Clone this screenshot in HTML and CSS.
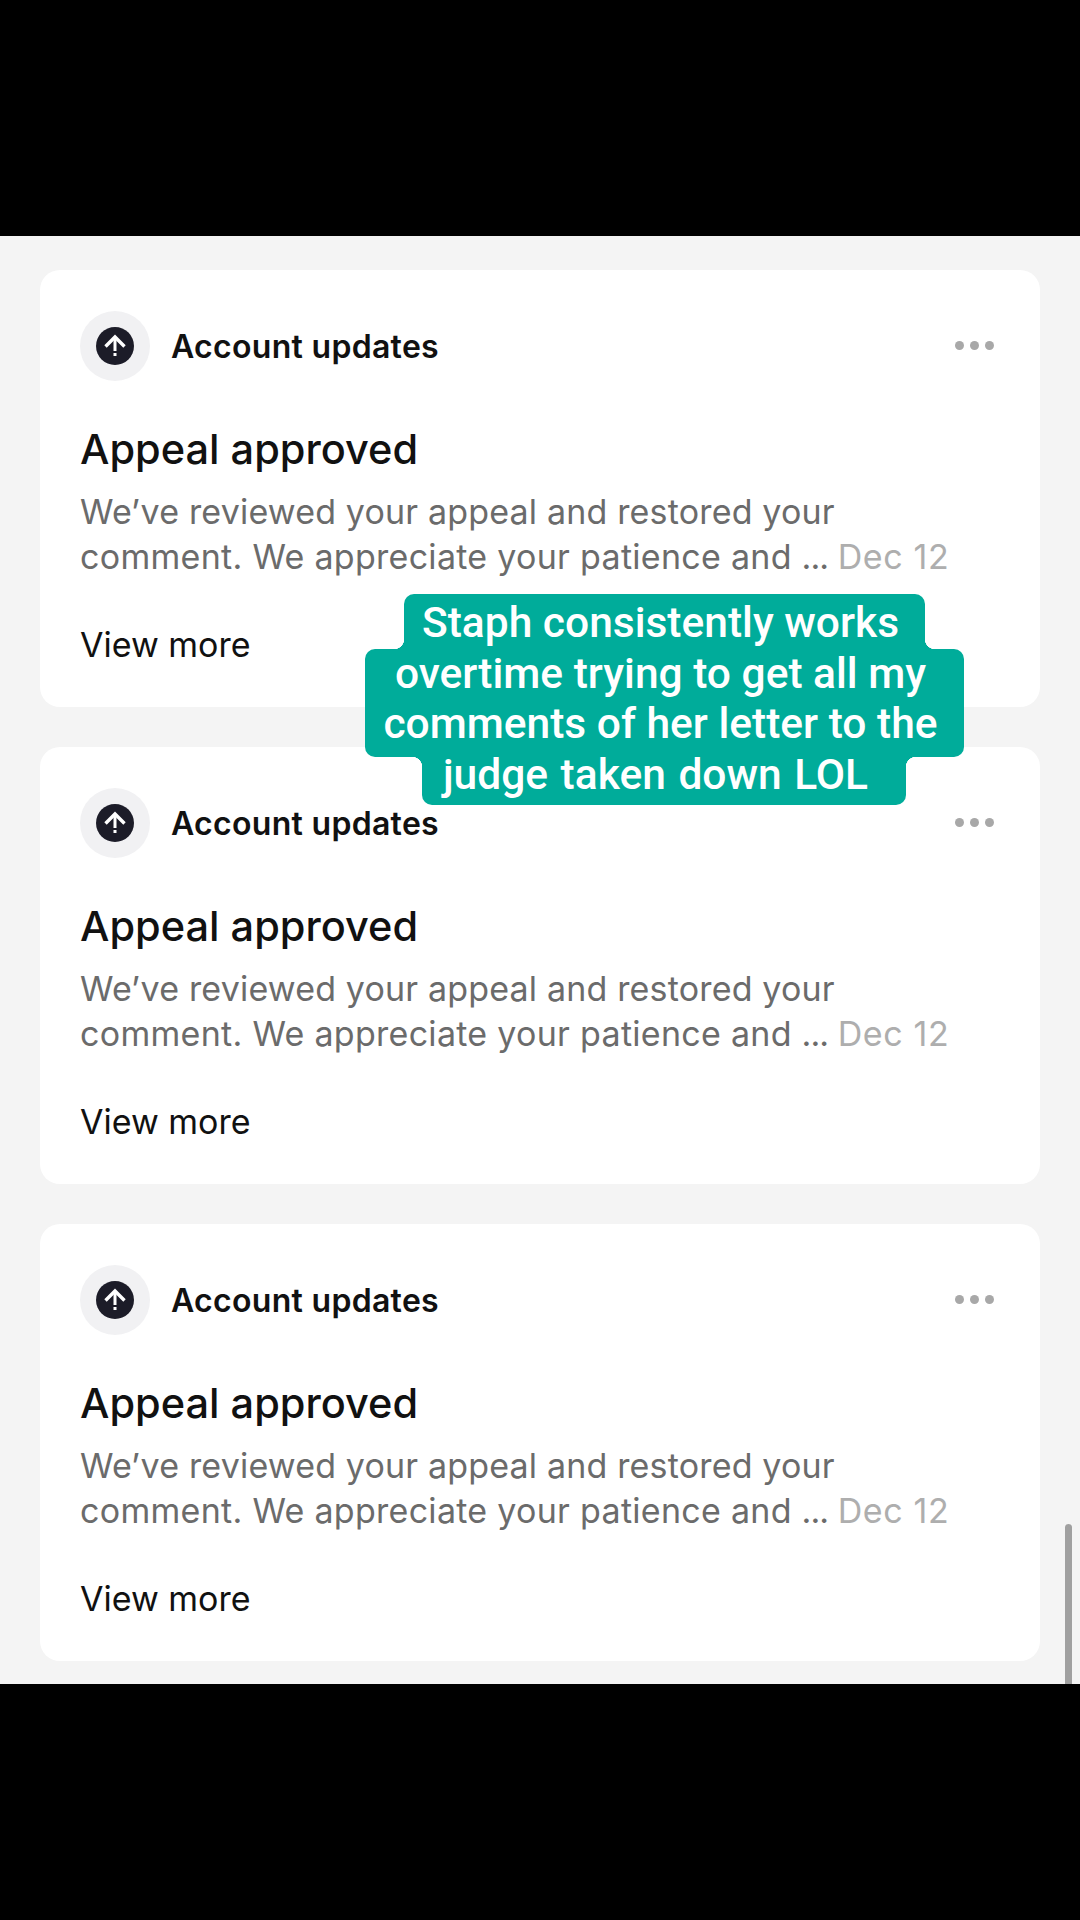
FILE: index.html
```html
<!DOCTYPE html>
<html>
  <head>
    <meta charset="utf-8">
    <title>Notifications</title>
    <link rel="stylesheet" href="styles.css">
  </head>
  <body>
    <div class="panel">
      <div class="card">
        <div class="head">
          <div class="badge">
            <svg class="icon" viewBox="0 0 40 40"><circle cx="20" cy="20" r="19" fill="#1c1c28"/><path d="M10.5 20.5 L20 11 L29.5 20.5" fill="none" stroke="#fff" stroke-width="3.4"/><path d="M20 13 V25" stroke="#fff" stroke-width="3"/><rect x="18.5" y="27" width="3" height="3" fill="#fff"/></svg>
          </div>
          <span class="source">Account updates</span>
          <div class="dots"><i></i><i></i><i></i></div>
        </div>
        <h2>Appeal approved</h2>
        <p class="body">We’ve reviewed your appeal and restored your<br><span class="wide">comment. We appreciate your patience and</span> <span class="ell">...</span> <span class="date">Dec 12</span></p>
        <div class="more">View more</div>
      </div>

      <div class="card">
        <div class="head">
          <div class="badge">
            <svg class="icon" viewBox="0 0 40 40"><circle cx="20" cy="20" r="19" fill="#1c1c28"/><path d="M10.5 20.5 L20 11 L29.5 20.5" fill="none" stroke="#fff" stroke-width="3.4"/><path d="M20 13 V25" stroke="#fff" stroke-width="3"/><rect x="18.5" y="27" width="3" height="3" fill="#fff"/></svg>
          </div>
          <span class="source">Account updates</span>
          <div class="dots"><i></i><i></i><i></i></div>
        </div>
        <h2>Appeal approved</h2>
        <p class="body">We’ve reviewed your appeal and restored your<br><span class="wide">comment. We appreciate your patience and</span> <span class="ell">...</span> <span class="date">Dec 12</span></p>
        <div class="more">View more</div>
      </div>

      <div class="card">
        <div class="head">
          <div class="badge">
            <svg class="icon" viewBox="0 0 40 40"><circle cx="20" cy="20" r="19" fill="#1c1c28"/><path d="M10.5 20.5 L20 11 L29.5 20.5" fill="none" stroke="#fff" stroke-width="3.4"/><path d="M20 13 V25" stroke="#fff" stroke-width="3"/><rect x="18.5" y="27" width="3" height="3" fill="#fff"/></svg>
          </div>
          <span class="source">Account updates</span>
          <div class="dots"><i></i><i></i><i></i></div>
        </div>
        <h2>Appeal approved</h2>
        <p class="body">We’ve reviewed your appeal and restored your<br><span class="wide">comment. We appreciate your patience and</span> <span class="ell">...</span> <span class="date">Dec 12</span></p>
        <div class="more">View more</div>
      </div>

      <div class="scrollbar"></div>
    </div>

    <div class="caption">
      <span class="line l1">Staph consistently works</span>
      <span class="line l2">overtime trying to get all my</span>
      <span class="line l3">comments of her letter to the</span>
      <span class="line l4">judge taken down LOL</span>
    </div>
  </body>
</html>
```

FILE: styles.css
```css
html, body {margin:0; padding:0; background:#000;}
body {width:1080px; height:1920px; position:relative; overflow:hidden; font-family:"Inter", "Liberation Sans", sans-serif;}

.panel {position:relative; margin-top:236px; height:1448px; box-sizing:border-box; padding:34px 40px 0; background:#f4f4f4; display:flex; flex-direction:column; gap:40px;}
.card {background:#fff; border-radius:20px; height:437px; box-sizing:border-box; padding:41px 40px 0;}

.head {display:flex; align-items:center; height:70px;}
.badge {width:70px; height:70px; border-radius:50%; background:#f1f1f3; display:flex; align-items:center; justify-content:center;}
.icon {width:40px; height:40px;}
.source {margin-left:21px; font-size:32px; letter-spacing:0.3px; font-weight:600; color:#111;}
.dots {margin-left:auto; display:flex; gap:6px; margin:0 6px 2px auto;}
.dots i {width:9px; height:9px; border-radius:50%; background:#a8a8a8;}

h2 {margin:43px 0 0; font-size:41.5px; line-height:50px; font-weight:500; color:#111;}
.body {margin:15px 0 0; font-size:34px; letter-spacing:0.17px; line-height:45px; color:#6b6b6b;}
.wide {letter-spacing:0.29px;}
.ell {letter-spacing:-1px;}
.date {color:#aeaeae; letter-spacing:0.6px;}
.more {margin-top:44px; font-size:34px; line-height:44px; color:#111;}

.scrollbar {position:absolute; right:8px; bottom:0; width:7px; height:160px; background:#a0a0a0; border-radius:4px 4px 0 0;}

.caption {position:absolute; left:365px; top:594px; width:599px; color:#fff; font-family:"Roboto", "Liberation Sans", sans-serif; font-size:42.5px; font-weight:470;}
.line {background:#00ac9a; display:block; position:relative; box-sizing:border-box; line-height:50px; text-align:center; white-space:nowrap;}
.l1 {width:521px; height:55px; margin-left:39px; padding:4px 8px 0 0; border-radius:10px 10px 0 0;}
.l2 {height:50px; padding-right:8px; border-radius:10px 10px 0 0;}
.l3 {height:58px; padding-right:8px; border-radius:0 0 10px 10px;}
.l4 {width:484px; height:55px; margin:-7px 0 0 57px; padding-right:17px; word-spacing:2px; border-radius:0 0 10px 10px; z-index:1;}

/* little inner corners where a narrower line meets a wider one */
.l1::before, .l1::after, .l4::before, .l4::after {content:""; position:absolute; width:10px; height:10px;}
.l1::before {left:-10px; bottom:0; background:radial-gradient(circle at 0 0, transparent 10px, #00ac9a 10.5px);}
.l1::after {right:-10px; bottom:0; background:radial-gradient(circle at 100% 0, transparent 10px, #00ac9a 10.5px);}
.l4::before {left:-10px; top:7px; background:radial-gradient(circle at 0 100%, transparent 10px, #00ac9a 10.5px);}
.l4::after {right:-10px; top:7px; background:radial-gradient(circle at 100% 100%, transparent 10px, #00ac9a 10.5px);}
```
